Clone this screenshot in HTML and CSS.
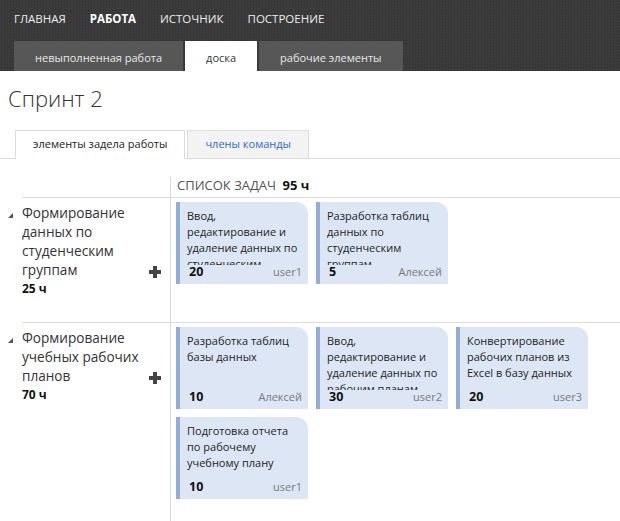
FILE: index.html
```html
<!DOCTYPE html>
<html lang="ru">
<head>
<meta charset="utf-8">
<title>Спринт 2</title>
<link rel="stylesheet" href="styles.css">
</head>
<body>
<header class="topbar">
  <nav class="mainnav">
    <a class="mainnav-item">ГЛАВНАЯ</a>
    <a class="mainnav-item is-active">РАБОТА</a>
    <a class="mainnav-item">ИСТОЧНИК</a>
    <a class="mainnav-item">ПОСТРОЕНИЕ</a>
  </nav>
  <nav class="subnav">
    <a class="subnav-tab">невыполненная работа</a>
    <a class="subnav-tab is-active">доска</a>
    <a class="subnav-tab">рабочие элементы</a>
  </nav>
</header>

<main class="page">
  <h1 class="page-title">Спринт 2</h1>

  <div class="pivot">
    <a class="pivot-tab is-active">элементы задела работы</a>
    <a class="pivot-tab">члены команды</a>
  </div>

  <section class="board">
    <div class="board-row board-header">
      <div class="lane-label"></div>
      <div class="column-head">СПИСОК ЗАДАЧ <b class="column-total">95 ч</b></div>
    </div>

    <div class="board-row lane">
      <div class="lane-label">
        <div class="lane-head">
          <svg class="toggle" width="5" height="5" viewBox="0 0 5 5"><polygon points="5,0 5,5 0,5" fill="#555"/></svg>
          <span class="lane-title">Формирование данных по студенческим группам</span>
          <svg class="add-icon" width="12" height="12" viewBox="0 0 12 12"><rect x="4" y="0" width="4" height="12" fill="#444"/><rect x="0" y="4" width="12" height="4" fill="#444"/></svg>
        </div>
        <div class="lane-hours">25 ч</div>
      </div>
      <div class="lane-cards">
        <div class="card">
          <div class="card-title">Ввод, редактирование и удаление данных по студенческим группам</div>
          <div class="card-foot"><b class="card-hours">20</b><span class="card-user">user1</span></div>
        </div>
        <div class="card">
          <div class="card-title">Разработка таблиц данных по студенческим группам</div>
          <div class="card-foot"><b class="card-hours">5</b><span class="card-user">Алексей</span></div>
        </div>
      </div>
    </div>

    <div class="board-row lane">
      <div class="lane-label">
        <div class="lane-head">
          <svg class="toggle" width="5" height="5" viewBox="0 0 5 5"><polygon points="5,0 5,5 0,5" fill="#555"/></svg>
          <span class="lane-title">Формирование учебных рабочих планов</span>
          <svg class="add-icon" width="12" height="12" viewBox="0 0 12 12"><rect x="4" y="0" width="4" height="12" fill="#444"/><rect x="0" y="4" width="12" height="4" fill="#444"/></svg>
        </div>
        <div class="lane-hours">70 ч</div>
      </div>
      <div class="lane-cards">
        <div class="card">
          <div class="card-title">Разработка таблиц базы данных</div>
          <div class="card-foot"><b class="card-hours">10</b><span class="card-user">Алексей</span></div>
        </div>
        <div class="card">
          <div class="card-title">Ввод, редактирование и удаление данных по рабочим планам</div>
          <div class="card-foot"><b class="card-hours">30</b><span class="card-user">user2</span></div>
        </div>
        <div class="card">
          <div class="card-title">Конвертирование рабочих планов из Excel в базу данных</div>
          <div class="card-foot"><b class="card-hours">20</b><span class="card-user">user3</span></div>
        </div>
        <div class="card">
          <div class="card-title">Подготовка отчета по рабочему учебному плану</div>
          <div class="card-foot"><b class="card-hours">10</b><span class="card-user">user1</span></div>
        </div>
      </div>
    </div>
  </section>
</main>
</body>
</html>
```

FILE: styles.css
```css
* { box-sizing: border-box; }

html, body {
  margin: 0;
  padding: 0;
  background: #fff;
}

body {
  font-family: "Open Sans", "Noto Sans", sans-serif;
  font-size: 11px;
  color: #222;
  overflow: hidden;
}

a { text-decoration: none; cursor: default; }

/* ---------- top bar ---------- */
.topbar {
  background-color: #3b3b3b;
  background-image: radial-gradient(rgba(0,0,0,0.18) 0.8px, transparent 1px);
  background-size: 3px 3px;
  height: 71px;
  padding-top: 11px;
}

.mainnav {
  display: flex;
  gap: 24px;
  padding-left: 14px;
  height: 16px;
  line-height: 16px;
}

.mainnav-item {
  color: #ececec;
  font-size: 11.5px;
}

.mainnav-item.is-active {
  font-weight: 700;
  color: #fff;
}

.subnav {
  display: flex;
  gap: 2px;
  margin-top: 14px;
  padding-left: 14px;
}

.subnav-tab {
  display: block;
  height: 30px;
  padding: 4px 21px 0;
  line-height: 26px;
  background: #575757;
  color: #e8e8e8;
  font-size: 11px;
}

.subnav-tab.is-active {
  background: #fff;
  color: #333;
}

/* ---------- page ---------- */
.page-title {
  margin: 12px 0 0 8px;
  font-size: 22px;
  font-weight: 300;
  line-height: 30px;
  color: #333;
}

.pivot {
  display: flex;
  gap: 2px;
  margin-top: 17px;
  padding-left: 15px;
  border-bottom: 1px solid #dcdcdc;
}

.pivot-tab {
  display: block;
  height: 28px;
  padding: 0 17px 2px;
  line-height: 25px;
  border: 1px solid #dcdcdc;
  border-bottom: none;
  background: #f3f3f3;
  color: #2f6bd1;
}

.pivot-tab.is-active {
  background: #fff;
  color: #222;
  height: 29px;
  margin-bottom: -1px;
}

/* ---------- board ---------- */
.board {
  margin: 18px 0 0 22px;
}

.board-row {
  display: grid;
  grid-template-columns: 148px 1fr;
}

.board-row > :last-child {
  border-left: 1px solid #dcdcdc;
}

.lane {
  border-top: 1px solid #dcdcdc;
}

.column-head {
  padding: 0 0 3px 6px;
  line-height: 17px;
  color: #555;
  font-size: 13px;
}

.column-total {
  margin-left: 3px;
  color: #111;
  font-weight: 700;
}

.lane .lane-label {
  padding: 5px 0 24px 0;
}

.lane-head {
  display: flex;
  align-items: flex-end;
}

.toggle {
  flex: none;
  align-self: flex-start;
  margin: 10px 9px 0 -14px;
}

.lane-title {
  width: 122px;
  font-size: 13.6px;
  line-height: 19px;
  color: #333;
}

.add-icon {
  flex: none;
  margin: 0 9px 1px auto;
}

.lane-hours {
  font-weight: 700;
  font-size: 12px;
  line-height: 19px;
  color: #111;
}

.lane-cards {
  display: flex;
  flex-wrap: wrap;
  align-content: flex-start;
  gap: 8px;
  padding: 4px 0 24px 5px;
}

.card {
  width: 132px;
  height: 82px;
  display: flex;
  flex-direction: column;
  background: #dce6f4;
  border-left: 4px solid #92add6;
  border-top-right-radius: 12px;
}

.card-title {
  flex: none;
  height: 57px;
  margin-top: 6px;
  padding: 0 7px 0 7px;
  font-size: 11px;
  line-height: 16px;
  color: #1e1e1e;
  overflow: hidden;
}

.card-foot {
  display: flex;
  justify-content: space-between;
  align-items: baseline;
  margin-top: -1px;
  height: 16px;
  line-height: 16px;
  padding: 0 6px 0 9px;
}

.card-hours {
  font-size: 12.5px;
  font-weight: 700;
  color: #111;
}

.card-user {
  font-size: 11px;
  color: #7a7a7a;
}
```
